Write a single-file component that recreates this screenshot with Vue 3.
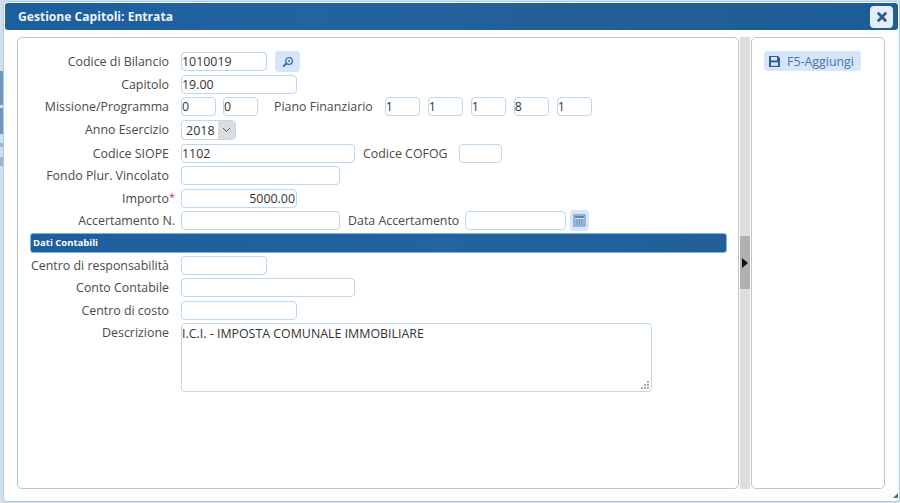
<script setup>
const pf = ['1', '1', '1', '8', '1']
</script>

<template>
  <div class="page">
    <div class="backdrop"></div>
    <div class="dialog">
      <header class="titlebar">
        <span class="title">Gestione Capitoli: Entrata</span>
        <button class="close" aria-label="Chiudi">
          <svg width="12" height="12" viewBox="0 0 12 12"><path d="M2.6 2.6 9.4 9.4M9.4 2.6 2.6 9.4" stroke="#2c5a85" stroke-width="2.8" stroke-linecap="round"/></svg>
        </button>
      </header>
      <div class="body">
        <main class="panel form">
          <div class="row r1">
            <label>Codice di Bilancio</label>
            <input class="w86" value="1010019" />
            <button class="iconbtn lens" aria-label="Cerca">
              <svg width="12" height="12" viewBox="0 0 13 13"><circle cx="7.6" cy="5.4" r="3.6" fill="none" stroke="#3a6a98" stroke-width="1.4"/><circle cx="7.6" cy="5.4" r="1" fill="#3a6a98"/><path d="M4.8 8 1.8 11" stroke="#3a6a98" stroke-width="2" stroke-linecap="round"/></svg>
            </button>
          </div>
          <div class="row"><label>Capitolo</label><input class="w116" value="19.00" /></div>
          <div class="row">
            <label>Missione/Programma</label>
            <input class="w35" value="0" />
            <input class="w35 next" value="0" />
            <span class="inline pf-label">Piano Finanziario</span>
            <input v-for="(v, i) in pf" :key="i" class="w35 pf" :value="v" />
          </div>
          <div class="row anno">
            <label>Anno Esercizio</label>
            <div class="select">
              <span class="sel-val">2018</span>
              <span class="sel-btn"><svg width="9" height="6" viewBox="0 0 9 6"><path d="M1 1 4.5 4.5 8 1" fill="none" stroke="#555" stroke-width="1"/></svg></span>
            </div>
          </div>
          <div class="row">
            <label>Codice SIOPE</label>
            <input class="w174" value="1102" />
            <span class="inline cofog">Codice COFOG</span>
            <input class="w43" />
          </div>
          <div class="row"><label>Fondo Plur. Vincolato</label><input class="w159" /></div>
          <div class="row">
            <label>Importo<i class="req">*</i></label>
            <input class="w116 right" value="5000.00" />
          </div>
          <div class="row">
            <label class="wide">Accertamento N.</label>
            <input class="w159" />
            <span class="inline data-label">Data Accertamento</span>
            <input class="w101" />
            <button class="iconbtn cal" aria-label="Calendario">
              <svg width="13" height="13" viewBox="0 0 13 13"><rect x="1" y="1" width="11" height="11" fill="#d3e1f0" stroke="#5a86b0"/><rect x="2" y="2" width="9" height="2" fill="#5a86b0"/><path d="M2 6h9M2 8h9M2 10h9M4 5v6M6.5 5v6M9 5v6" stroke="#5a86b0" stroke-width=".8"/></svg>
            </button>
          </div>
          <div class="section">Dati Contabili</div>
          <div class="row"><label>Centro di responsabilità</label><input class="w86" /></div>
          <div class="row"><label>Conto Contabile</label><input class="w174" /></div>
          <div class="row"><label>Centro di costo</label><input class="w116" /></div>
          <div class="row area-row">
            <label>Descrizione</label>
            <div class="area">
              <span>I.C.I. - IMPOSTA COMUNALE IMMOBILIARE</span>
              <svg class="grip" width="9" height="9" viewBox="0 0 9 9"><path d="M7 1h2v2H7zM7 4h2v2H7zM4 4h2v2H4zM7 7h2v2H7zM4 7h2v2H4zM1 7h2v2H1z" fill="#aaa"/></svg>
            </div>
          </div>
        </main>
        <div class="splitter">
          <div class="handle"><svg width="6" height="10" viewBox="0 0 6 10"><path d="M0 0 6 5 0 10Z" fill="#111"/></svg></div>
        </div>
        <aside class="panel side">
          <button class="add">
            <svg width="11" height="11" viewBox="0 0 11 11"><path d="M0 0h9l2 2v9H0Z" fill="#2f6190"/><rect x="2" y="1" width="6" height="3.4" fill="#d6e5f7"/><rect x="2" y="6.4" width="7" height="3.4" fill="#d6e5f7"/></svg>
            <span>F5-Aggiungi</span>
          </button>
        </aside>
      </div>
      <svg class="corner" width="5" height="5" viewBox="0 0 5 5"><path d="M5 0V5H0Z" fill="#666"/></svg>
    </div>
  </div>
</template>

<style>
html, body { margin: 0; padding: 0; background: #fff; }
</style>

<style scoped>
.page { position: relative; width: 900px; height: 503px; overflow: hidden; background: #d4dee8; font-family: "Open Sans", "Liberation Sans", sans-serif; font-size: 12.4px; color: #4a4a4a; }
.backdrop { position: absolute; left: 0; top: 71px; width: 3px; height: 95px; background: linear-gradient(180deg, #6f96bb 0 34px, #d4dee8 34px 37px, #6f96bb 37px 63px, #d4dee8 63px 72px, #9db4ca 72px 76px, #d4dee8 76px 86px, #9db4ca 86px 95px); }
.dialog { position: absolute; left: 3px; top: 1px; width: 897px; height: 501px; box-sizing: border-box; background: #fdfdfd; border: 1px solid #a9d0ea; border-radius: 4px; display: flex; flex-direction: column; padding: 1px 1px 0 1px; }
.titlebar { height: 27px; flex: none; box-sizing: border-box; background: linear-gradient(90deg, #1c5f9c 0%, #2263a0 35%, #235f96 65%, #1c5d95 100%); border-radius: 3px; display: flex; align-items: center; justify-content: space-between; padding: 0 5px 0 13px; }
.title { color: #f0f4f8; font-weight: 700; font-size: 12.1px; }
.close { width: 23px; height: 22px; padding: 0; border: none; border-radius: 4px; background: #e4eefa; display: flex; align-items: center; justify-content: center; }
.body { flex: 1; display: flex; padding: 7px 12px 12px 12px; min-height: 0; }
.panel { box-sizing: border-box; background: #fff; border: 1px solid #c4c4c4; border-radius: 5px; }
.form { width: 722px; flex: none; padding: 12px 11px 0 12px; display: flex; flex-direction: column; }
.splitter { width: 10px; flex: none; margin: 0 1px 0 1px; background: #dedede; display: flex; align-items: center; position: relative; }
.handle { position: absolute; left: 0; top: 199px; width: 10px; height: 53px; background: #b0b0b0; display: flex; align-items: center; padding-left: 2px; box-sizing: border-box; }
.side { width: 134px; flex: none; padding: 13px 12px; }
.row { display: flex; align-items: center; height: 22.5px; flex: none; }
.r1 { height: 23px; }
.anno { height: 24px; }
.anno label { margin-bottom: 2px; }
label { width: 139px; flex: none; text-align: right; margin-right: 12px; white-space: nowrap; position: relative; }
label.wide { width: 145px; margin-right: 6px; }
input { box-sizing: border-box; height: 19px; border: 1px solid #bcd8ee; border-radius: 4px; background: #fff; padding: 0 1px 0 0; font: inherit; color: #333; outline: none; }
.right { text-align: right; }
.w35 { width: 35px; }
.w43 { width: 43px; }
.w86 { width: 86px; }
.w101 { width: 101px; }
.w116 { width: 116px; }
.w159 { width: 159px; }
.w174 { width: 174px; }
.next { margin-left: 7px; }
.pf { margin-right: 8px; }
.pf-label { margin-left: 16px; margin-right: 12px; }
.inline { white-space: nowrap; }
.cofog { margin-left: 8px; margin-right: 11px; }
.data-label { margin-left: 8px; margin-right: 6px; }
.req { position: absolute; right: -6px; top: -1px; color: #d33; font-style: normal; font-size: 11px; }
.iconbtn { width: 19px; height: 21px; padding: 0; margin-left: 8px; border: none; border-radius: 4px; background: #d6e5f9; display: flex; align-items: center; justify-content: center; }
.lens { width: 25px; }
.cal { margin-left: 4px; }
.select { box-sizing: border-box; width: 55px; height: 20px; border: 1px solid #bcd8ee; border-radius: 4px; display: flex; overflow: hidden; }
.sel-val { flex: 1; padding-left: 4px; line-height: 19px; color: #333; font-size: 12.5px; }
.sel-btn { width: 17px; background: #dcdcdc; display: flex; align-items: center; justify-content: center; }
.section { margin-top: 1px; margin-bottom: 1px; height: 20px; box-sizing: border-box; flex: none; background: linear-gradient(90deg, #1c5f9c, #2263a0 60%, #225f98); border: 1px solid #7fb2dc; border-radius: 3px; color: #fff; font-weight: 700; font-size: 9.5px; line-height: 17px; padding-left: 2px; }
.area-row { height: auto; align-items: flex-start; }
.area-row label { line-height: 21px; }
.area { box-sizing: border-box; position: relative; width: 471px; height: 69px; margin-top: 1px; border: 1px solid #bcd8ee; border-radius: 4px; padding: 0; color: #333; line-height: 19px; }
.grip { position: absolute; right: 2px; bottom: 2px; }
.add { display: inline-flex; align-items: center; gap: 7px; height: 20px; padding: 0 7px 0 5px; border: none; border-radius: 4px; background: #d6e5f9; color: #4a78a4; font: inherit; white-space: nowrap; }
.corner { position: absolute; right: 1px; bottom: 3px; }
</style>
